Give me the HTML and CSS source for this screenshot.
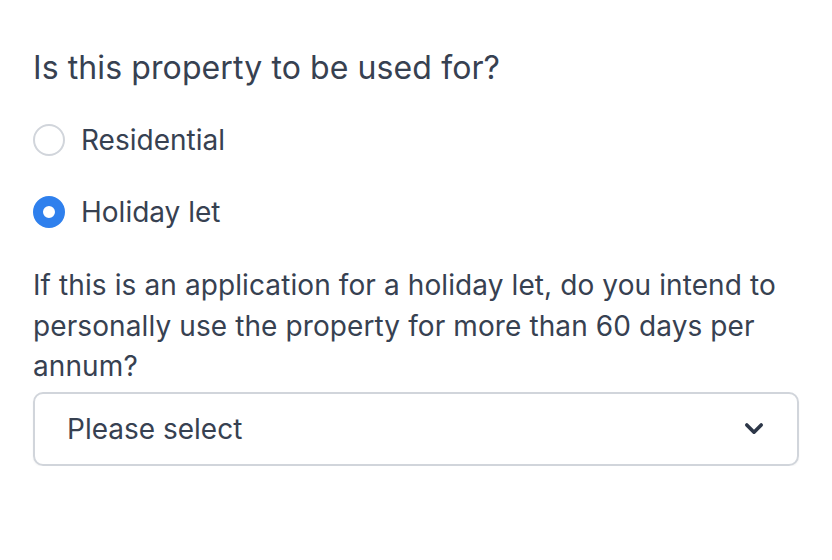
FILE: index.html
```html
<!DOCTYPE html>
<html>
    <head>
        <link rel="stylesheet" href="styles.css">
    </head>
    <body>
        <form class="question">
            <h2 class="question-title">Is this property to be used for?</h2>
            <div class="options">
                <label class="option">
                    <span class="radio"></span>
                    <span class="option-label">Residential</span>
                </label>
                <label class="option">
                    <span class="radio checked"></span>
                    <span class="option-label">Holiday let</span>
                </label>
            </div>
            <p class="follow-up">If this is an application for a holiday let, do you intend to personally use the property for more than 60 days per annum?</p>
            <div class="select">
                <span class="select-value">Please select</span>
                <svg class="chevron" width="20" height="14" viewBox="0 0 20 14">
                    <path d="M2.8 3 L10 10.2 L17.2 3" fill="none" stroke="#2d3748" stroke-width="3.6" stroke-linecap="round" stroke-linejoin="round"/>
                </svg>
            </div>
        </form>
    </body>
</html>
```

FILE: styles.css
```css
body{
    margin:0px;
    background:white;
    font-family: "Inter","Noto Sans",sans-serif;
    color:#374151;
}
.question{
    padding:50px 33px 0px 33px;
}
.question-title{
    font-size:32px;
    font-weight:400;
    line-height:36px;
    margin:0px;
    letter-spacing:0.1px;
}
.options{
    display:flex;
    flex-direction:column;
    gap:40px;
    margin-top:38px;
}
.option{
    display:flex;
    align-items:center;
    gap:16px;
    height:32px;
}
.radio{
    box-sizing:border-box;
    flex-shrink:0;
    width:32px;
    height:32px;
    border-radius:50%;
    border:2px solid #d1d5db;
    background:white;
}
.radio.checked{
    border:10px solid #2f80ed;
    background:white;
}
.option-label{
    font-size:28px;
}
.follow-up{
    font-size:28px;
    line-height:40.5px;
    letter-spacing:0.1px;
    margin:37px 0px 5px 0px;
}
.select{
    box-sizing:border-box;
    height:74px;
    border:2px solid #d1d5db;
    border-radius:10px;
    display:flex;
    align-items:center;
    justify-content:space-between;
    padding:0px 33px 0px 32px;
    box-shadow:0px 1px 2px rgba(0,0,0,0.05);
}
.select-value{
    font-size:28px;
}
```
